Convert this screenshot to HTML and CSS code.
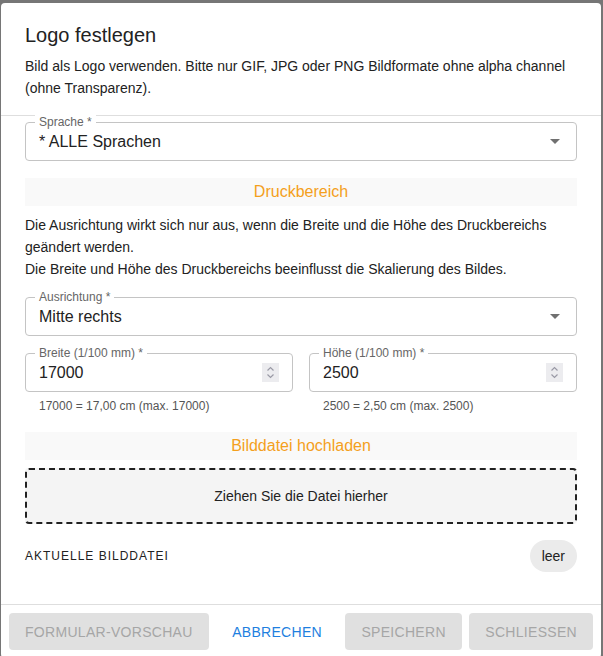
FILE: index.html
```html
<!DOCTYPE html>
<html lang="de">
<head>
    <meta charset="UTF-8">
    <meta name="viewport" content="width=device-width, initial-scale=1.0">
    <title>Logo festlegen</title>
    <link rel="stylesheet" href="styles.css">
</head>
<body>

<div class="dialog">
    <div class="dialog-head">
        <h1>Logo festlegen</h1>
        <p>Bild als Logo verwenden. Bitte nur GIF, JPG oder PNG Bildformate ohne alpha channel (ohne Transparenz).</p>
    </div>

    <div class="dialog-body">
        <div class="field">
            <span class="field-label">Sprache *</span>
            <span class="field-value">* ALLE Sprachen</span>
            <span class="arrow"></span>
        </div>

        <div class="section-title">Druckbereich</div>
        <p class="hint">Die Ausrichtung wirkt sich nur aus, wenn die Breite und die Höhe des Druckbereichs geändert werden.<br>Die Breite und Höhe des Druckbereichs beeinflusst die Skalierung des Bildes.</p>

        <div class="field">
            <span class="field-label">Ausrichtung *</span>
            <span class="field-value">Mitte rechts</span>
            <span class="arrow"></span>
        </div>

        <div class="size-row">
            <div>
                <div class="field">
                    <span class="field-label">Breite (1/100 mm) *</span>
                    <span class="field-value">17000</span>
                    <span class="spinner">
                        <svg width="17" height="19" viewBox="0 0 17 19"><path d="M5.5 7.5l3-3 3 3M5.5 11.5l3 3 3-3" fill="none" stroke="#9a9aa6" stroke-width="1.2"/></svg>
                    </span>
                </div>
                <div class="helper">17000 = 17,00 cm (max. 17000)</div>
            </div>
            <div>
                <div class="field">
                    <span class="field-label">Höhe (1/100 mm) *</span>
                    <span class="field-value">2500</span>
                    <span class="spinner">
                        <svg width="17" height="19" viewBox="0 0 17 19"><path d="M5.5 7.5l3-3 3 3M5.5 11.5l3 3 3-3" fill="none" stroke="#9a9aa6" stroke-width="1.2"/></svg>
                    </span>
                </div>
                <div class="helper">2500 = 2,50 cm (max. 2500)</div>
            </div>
        </div>

        <div class="section-title upload-title">Bilddatei hochladen</div>
        <div class="dropzone">Ziehen Sie die Datei hierher</div>

        <div class="current">
            <span class="current-label">Aktuelle Bilddatei</span>
            <span class="chip">leer</span>
        </div>
    </div>

    <div class="dialog-actions">
        <button class="btn" disabled>Formular-Vorschau</button>
        <button class="btn btn-text">Abbrechen</button>
        <button class="btn" disabled>Speichern</button>
        <button class="btn" disabled>Schliessen</button>
    </div>
</div>

</body>
</html>
```

FILE: styles.css
```css
* {
    box-sizing: border-box;
}
body {
    margin: 0;
    background-color: #767676;
    font-family: "Liberation Sans", Arial, sans-serif;
    color: #222;
    overflow: hidden;
}
.dialog {
    margin: 3px 2px 0 1px;
    background-color: white;
    border-radius: 4px;
}
.dialog-head {
    padding: 16px 24px 16px;
}
.dialog-head h1 {
    margin: 0;
    font-size: 20px;
    font-weight: 400;
    line-height: 32px;
    color: #222;
}
.dialog-head p {
    margin: 4px 0 0;
    font-size: 14px;
    line-height: 22px;
}
.dialog-body {
    border-top: 1px solid #dedede;
    border-bottom: 1px solid #dedede;
    padding: 6px 24px 32px;
}
.field {
    position: relative;
    height: 39px;
    border: 1px solid #c4c4c4;
    border-radius: 4px;
    display: flex;
    align-items: center;
    padding: 0 13px;
}
.field-label {
    position: absolute;
    top: -8px;
    left: 9px;
    padding: 0 4px;
    background: white;
    font-size: 12px;
    line-height: 14px;
    color: #666;
}
.field-value {
    flex: 1;
    font-size: 16px;
    color: #222;
}
.arrow {
    width: 0;
    height: 0;
    border-left: 5px solid transparent;
    border-right: 5px solid transparent;
    border-top: 5px solid #707070;
    margin-right: 3px;
}
.spinner {
    display: flex;
    width: 17px;
    height: 19px;
    background-color: #ececef;
}
.section-title {
    margin-top: 17px;
    height: 28px;
    line-height: 28px;
    background-color: #f9f9f9;
    text-align: center;
    font-size: 16px;
    color: #f4a01c;
}
.hint {
    margin: 8px 0 17px;
    font-size: 14px;
    line-height: 22px;
}
.size-row {
    display: grid;
    grid-template-columns: 1fr 1fr;
    gap: 16px;
    margin-top: 17px;
}
.helper {
    margin: 6px 14px 0;
    font-size: 12px;
    line-height: 16px;
    color: #555;
}
.upload-title {
    margin-top: 18px;
}
.dropzone {
    margin-top: 8px;
    height: 56px;
    border: 2px dashed #222;
    border-radius: 4px;
    background-color: #f4f4f4;
    display: flex;
    align-items: center;
    justify-content: center;
    font-size: 14px;
}
.current {
    display: flex;
    align-items: center;
    justify-content: space-between;
    margin-top: 16px;
}
.current-label {
    font-size: 12px;
    text-transform: uppercase;
    letter-spacing: 1px;
    color: #222;
}
.chip {
    height: 32px;
    line-height: 32px;
    padding: 0 12px;
    border-radius: 16px;
    background-color: #ebebeb;
    font-size: 14px;
}
.dialog-actions {
    display: flex;
    justify-content: space-between;
    padding: 8px;
}
.btn {
    font-family: "Liberation Sans", Arial, sans-serif;
    font-size: 14px;
    text-transform: uppercase;
    letter-spacing: 0.3px;
    height: 37px;
    padding: 0 16px;
    border: none;
    border-radius: 4px;
    background-color: #e0e0e0;
    color: #a6a6a6;
}
.btn-text {
    background: none;
    color: #1e7fe0;
}
```
